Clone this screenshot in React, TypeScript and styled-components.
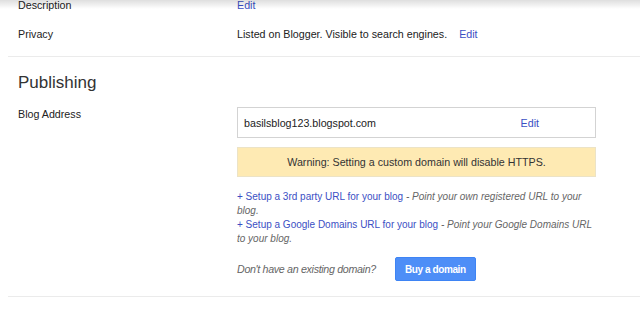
import React from 'react'
import styled, { createGlobalStyle } from 'styled-components'

const GlobalStyle = createGlobalStyle`
  html, body {
    margin: 0;
    padding: 0;
    background: #fff;
  }
  body {
    font-family: "Liberation Sans", Arial, sans-serif;
    font-size: 10.7px;
    color: #222;
    overflow: hidden;
  }
`

const Page = styled.div`
  position: relative;
  width: 640px;
  height: 311px;
  overflow: hidden;
`

const HeaderShadow = styled.div`
  position: absolute;
  top: 0;
  left: 0;
  right: 0;
  height: 9px;
  background: linear-gradient(to bottom, rgba(0, 0, 0, 0.13), rgba(0, 0, 0, 0));
  z-index: 2;
`

const Content = styled.div`
  margin-top: -10px;
  padding-left: 8px;
`

const Section = styled.section<{ $pad?: string }>`
  border-bottom: 1px solid #ebebeb;
  padding: ${(p) => p.$pad || '0'};
`

const Row = styled.div<{ $h?: number }>`
  display: grid;
  grid-template-columns: 219px 1fr;
  align-items: ${(p) => (p.$h ? 'center' : 'start')};
  min-height: ${(p) => (p.$h ? `${p.$h}px` : 'auto')};
  padding-left: 10px;
`

const Label = styled.div<{ $top?: number }>`
  color: #222;
  padding-top: ${(p) => p.$top || 0}px;
`

const Value = styled.div`
  color: #222;
`

const EditLink = styled.a<{ $gap?: number }>`
  color: #3b4fc4;
  text-decoration: none;
  margin-left: ${(p) => p.$gap || 0}px;
  cursor: pointer;
`

const Heading = styled.h2`
  margin: 0;
  padding: 16px 0 0 10px;
  font-family: "Liberation Sans", Arial, sans-serif;
  font-size: 17px;
  font-weight: normal;
  color: #333;
  height: 34px;
`

const Stack = styled.div`
  display: flex;
  flex-direction: column;
  width: 359px;
`

const AddressBox = styled.div`
  display: flex;
  align-items: center;
  justify-content: space-between;
  height: 29px;
  border: 1px solid #d3d3d3;
  padding: 0 56px 0 6px;
  color: #222;
`

const Warning = styled.div`
  margin-top: 9px;
  height: 28px;
  display: flex;
  align-items: center;
  justify-content: center;
  background: #feeab3;
  border: 1px solid #ece3c6;
  color: #333;
`

const Links = styled.div`
  margin-top: 13px;
  display: flex;
  flex-direction: column;
  gap: 1px;
  font-size: 10px;
  line-height: 13.5px;
  width: 390px;
`

const Option = styled.div`
  color: #666;
  font-style: italic;
  white-space: nowrap;
`

const Blue = styled.span`
  color: #3b4fc4;
  font-style: normal;
`

const BuyRow = styled.div`
  margin-top: 12px;
  display: flex;
  align-items: center;
  gap: 19px;
  padding-bottom: 15px;
`

const Hint = styled.span`
  color: #666;
  font-style: italic;
  letter-spacing: -0.33px;
`

const BuyButton = styled.button`
  height: 24px;
  padding: 0 9px;
  border: 1px solid #3e84f4;
  border-radius: 2px;
  background: #4d8ef7;
  color: #fff;
  font-family: "Liberation Sans", Arial, sans-serif;
  font-size: 10px;
  font-weight: bold;
  letter-spacing: -0.4px;
  cursor: pointer;
`

const App: React.FC = () => {
  return (
    <Page>
      <GlobalStyle />
      <HeaderShadow />
      <Content>
        <Section $pad="0 0 8px">
          <Row $h={29}>
            <Label>Description</Label>
            <Value>
              <EditLink>Edit</EditLink>
            </Value>
          </Row>
          <Row $h={29}>
            <Label>Privacy</Label>
            <Value>
              Listed on Blogger. Visible to search engines.
              <EditLink $gap={12}>Edit</EditLink>
            </Value>
          </Row>
        </Section>
        <Section>
          <Heading>Publishing</Heading>
          <Row>
            <Label $top={1}>Blog Address</Label>
            <Stack>
              <AddressBox>
                <span>basilsblog123.blogspot.com</span>
                <EditLink>Edit</EditLink>
              </AddressBox>
              <Warning>Warning: Setting a custom domain will disable HTTPS.</Warning>
              <Links>
                <Option>
                  <Blue>+ Setup a 3rd party URL for your blog</Blue> - Point your own registered URL to your
                  <br />
                  blog.
                </Option>
                <Option>
                  <Blue>+ Setup a Google Domains URL for your blog</Blue> - Point your Google Domains URL
                  <br />
                  to your blog.
                </Option>
              </Links>
              <BuyRow>
                <Hint>Don't have an existing domain?</Hint>
                <BuyButton>Buy a domain</BuyButton>
              </BuyRow>
            </Stack>
          </Row>
        </Section>
      </Content>
    </Page>
  )
}

export default App
